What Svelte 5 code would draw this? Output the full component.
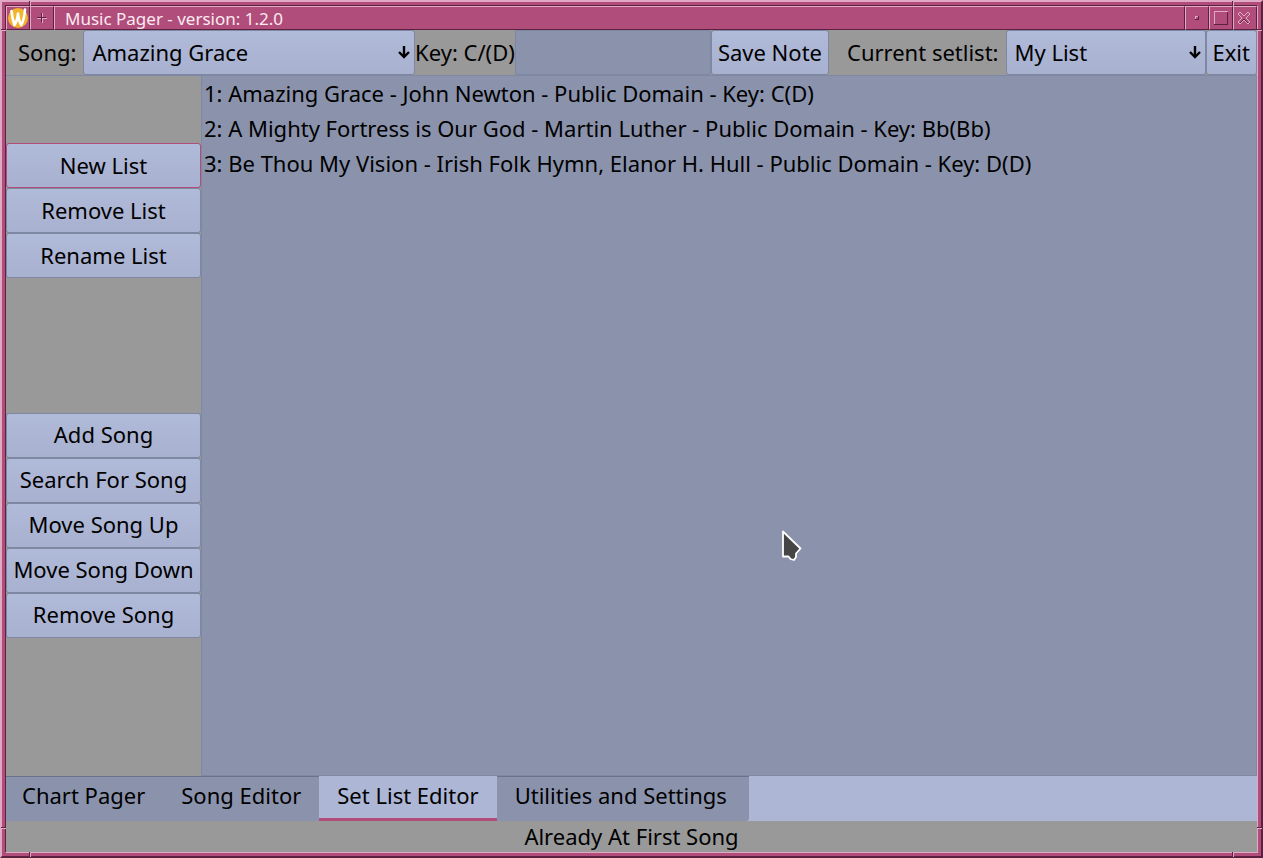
<script>
  let song = $state('Amazing Grace');
  let setlist = $state('My List');
  let note = $state('');
  let activeTab = $state('Set List Editor');

  const songs = [
    '1: Amazing Grace - John Newton - Public Domain - Key: C(D)',
    '2: A Mighty Fortress is Our God - Martin Luther - Public Domain - Key: Bb(Bb)',
    '3: Be Thou My Vision - Irish Folk Hymn, Elanor H. Hull - Public Domain - Key: D(D)'
  ];
  const listActions = ['New List', 'Remove List', 'Rename List'];
  const songActions = ['Add Song', 'Search For Song', 'Move Song Up', 'Move Song Down', 'Remove Song'];
  const tabs = ['Chart Pager', 'Song Editor', 'Set List Editor', 'Utilities and Settings'];
</script>

{#snippet arrow()}
  <svg class="arrow" width="14" height="16" viewBox="0 0 14 16" aria-hidden="true">
    <path d="M7 2V13M2 8L7 13L12 8" fill="none" stroke="#000" stroke-width="2.4" />
  </svg>
{/snippet}

<div class="window">
  <span class="notch h tl"></span>
  <span class="notch h bl"></span>
  <span class="notch h tr"></span>
  <span class="notch h br"></span>
  <span class="notch v tl"></span>
  <span class="notch v bl"></span>
  <span class="notch v tr"></span>
  <span class="notch v br"></span>

  <header class="titlebar">
    <button class="tb" aria-label="Window menu">
      <svg width="22" height="22" viewBox="0 0 22 22">
        <circle cx="11" cy="11" r="10" fill="#f2b42c" />
        <path d="M4.500 4C5 9 6 14 7.500 18C9.500 15 10.500 11 11 6.500C11.500 11 12.500 15 14.200 18C16.500 14 17.500 9 18 2.500" fill="none" stroke="#fff" stroke-width="2.600" stroke-linejoin="round" stroke-linecap="round" />
      </svg>
    </button>
    <button class="tb" aria-label="Stick window">
      <svg width="22" height="22" viewBox="0 0 22 22" shape-rendering="crispEdges">
        <path d="M6 11.500H16M11.500 6V16" stroke="#e0aac4" />
        <path d="M6 10.500H15M10.500 6V15" stroke="#5c2040" />
      </svg>
    </button>
    <h1>Music Pager - version: 1.2.0</h1>
    <button class="tb" aria-label="Minimize">
      <svg width="22" height="22" viewBox="0 0 22 22" shape-rendering="crispEdges">
        <path d="M9.500 13V9.500H12" fill="none" stroke="#e0aac4" />
        <path d="M12.500 9V12.500H9" fill="none" stroke="#5c2040" />
      </svg>
    </button>
    <button class="tb" aria-label="Maximize">
      <svg width="22" height="22" viewBox="0 0 22 22" shape-rendering="crispEdges">
        <path d="M4.500 18V4.500H18" fill="none" stroke="#e0aac4" />
        <path d="M17.500 5V17.500H4" fill="none" stroke="#5c2040" />
      </svg>
    </button>
    <button class="tb" aria-label="Close">
      <svg width="22" height="22" viewBox="0 0 22 22">
        <path d="M16 7L12 11L16 15L15 17L10 12L6 16" fill="none" stroke="#5c2040" />
        <path d="M4 15L8 11L4 7L6 5L10 9L14 5L16 7L12 11L16 15L14 17L10 13L6 17Z" fill="none" stroke="#e0aac4" />
      </svg>
    </button>
  </header>

  <div class="toolbar">
    <label class="song-label" for="song">Song:</label>
    <div class="picker song">
      <select id="song" bind:value={song}>
        <option>Amazing Grace</option>
        <option>A Mighty Fortress is Our God</option>
        <option>Be Thou My Vision</option>
      </select>
      {@render arrow()}
    </div>
    <label class="key" for="note">Key: C/(D)</label>
    <input id="note" type="text" bind:value={note} />
    <button class="btn">Save Note</button>
    <label class="list-label" for="setlist">Current setlist:</label>
    <div class="picker list">
      <select id="setlist" bind:value={setlist}>
        <option>My List</option>
      </select>
      {@render arrow()}
    </div>
    <button class="btn">Exit</button>
  </div>

  <main>
    <aside>
      <div class="one"></div>
      {#each listActions as name, i}
        <button class="btn" class:focused={i === 0}>{name}</button>
      {/each}
      <div class="two"></div>
      {#each songActions as name}
        <button class="btn">{name}</button>
      {/each}
      <div class="two"></div>
    </aside>
    <ul>
      {#each songs as line}
        <li>{line}</li>
      {/each}
    </ul>
  </main>

  <nav>
    {#each tabs as tab}
      <button class="tab" class:active={activeTab === tab} onclick={() => (activeTab = tab)}>{tab}</button>
    {/each}
  </nav>
  <footer>Already At First Song</footer>

  <svg class="pointer" width="24" height="36" viewBox="0 0 24 36" aria-hidden="true">
    <path d="M5 6.500V31.500H10.500L12.500 34L16 35L18 32V28.500L22.500 23.500Z" fill="#454545" stroke="#fff" stroke-width="1.800" stroke-linejoin="round" />
  </svg>
</div>

<style>
  :global(body) {
    margin: 0;
  }
  .window,
  .window * {
    box-sizing: border-box;
  }
  .window {
    --pink: #b04d7a;
    --light: #e0aac4;
    --dark: #5c2040;
    --edge: #7f88a2;
    --field: #8b93ac;
    --grey: #999999;
    position: relative;
    display: flex;
    flex-direction: column;
    height: 100vh;
    padding: 3px;
    background: var(--pink);
    border: 2px solid;
    border-color: var(--light) var(--dark) var(--dark) var(--light);
    font: 22px/30px "Noto Sans", sans-serif;
    color: #000;
  }
  button,
  select,
  input {
    margin: 0;
    font: inherit;
    color: inherit;
    border-radius: 0;
    outline: none;
  }
  .titlebar {
    display: flex;
    height: 25px;
    flex: none;
    border: solid;
    border-width: 1px 1px 0;
    border-color: var(--dark) var(--light) var(--dark) var(--dark);
  }
  .tb,
  h1 {
    margin: 0;
    background: var(--pink);
    border: 1px solid;
    border-color: var(--light) var(--dark) var(--dark) var(--light);
  }
  .tb {
    width: 24px;
    padding: 0;
    display: flex;
    align-items: center;
    justify-content: center;
    flex: none;
  }
  .tb svg {
    flex: none;
  }
  h1 {
    flex: 1;
    padding-left: 10px;
    font-size: 17px;
    line-height: 24px;
    font-weight: 400;
    color: #fbeaf2;
  }
  .toolbar {
    display: flex;
    height: 45px;
    flex: none;
    border-left: 1px solid var(--dark);
    border-right: 1px solid var(--light);
    background: var(--grey);
  }
  .toolbar label {
    flex: none;
    line-height: 45px;
    white-space: nowrap;
  }
  .song-label {
    padding: 0 7px 0 12px;
  }
  .list-label {
    padding: 0 7px 0 18px;
  }
  .picker {
    position: relative;
  }
  .song {
    flex: 1 1 330px;
  }
  .list {
    flex: 0 1 200px;
  }
  .btn,
  select {
    height: 45px;
    background: linear-gradient(#b0bad9, #a8b1cf);
    border: 1px solid var(--edge);
    border-radius: 3px;
  }
  .btn {
    flex: none;
    padding: 0 6px 2px;
    white-space: nowrap;
  }
  select {
    appearance: none;
    width: 100%;
    padding: 0 28px 2px 8px;
  }
  .arrow {
    position: absolute;
    right: 4px;
    top: 14px;
    pointer-events: none;
  }
  input {
    flex: 0 1 196px;
    min-width: 0;
    padding: 0 6px;
    background: var(--field);
    border: 1px solid var(--edge);
    border-radius: 2px;
  }
  main {
    display: flex;
    flex: 1;
    min-height: 0;
    border-left: 1px solid var(--dark);
    border-right: 1px solid var(--light);
    background: var(--grey);
  }
  aside {
    display: flex;
    flex-direction: column;
    width: 195px;
    flex: none;
    padding-bottom: 4px;
    border-top: 1px solid var(--edge);
  }
  .one {
    flex: 1;
  }
  .two {
    flex: 2;
  }
  .focused {
    z-index: 1;
    border-color: var(--pink);
  }
  ul {
    flex: 1;
    margin: 0;
    padding: 0 2px;
    list-style: none;
    background: var(--field);
    border: 1px solid var(--edge);
  }
  li {
    line-height: 35px;
  }
  nav {
    display: flex;
    height: 45px;
    flex: none;
    background: #adb6d5;
    border-left: 1px solid var(--dark);
    border-right: 1px solid var(--light);
  }
  .tab {
    padding: 0 18px 6px;
    background: var(--field);
    border: 0;
    border-top: 1px solid #6b738c;
    border-bottom: 3px solid var(--field);
    white-space: nowrap;
  }
  .tab:first-child {
    padding-left: 16px;
  }
  .tab:last-child {
    padding-right: 22px;
    border-bottom-right-radius: 3px;
  }
  .tab.active {
    background: #adb6d5;
    border-top-color: #adb6d5;
    border-bottom-color: var(--pink);
  }
  footer {
    height: 32px;
    flex: none;
    text-align: center;
    background: var(--grey);
    border: solid;
    border-width: 0 1px 1px;
    border-color: var(--grey) var(--light) var(--light) var(--dark);
  }
  .notch {
    position: absolute;
    background: var(--dark);
  }
  .notch.h {
    width: 5px;
    height: 2px;
    border-bottom: 1px solid var(--light);
  }
  .notch.v {
    width: 2px;
    height: 5px;
    border-right: 1px solid var(--light);
  }
  .h.tl { left: -1px; top: 27px; }
  .h.tr { right: -1px; top: 27px; }
  .h.bl { left: -1px; bottom: 27px; }
  .h.br { right: -1px; bottom: 27px; }
  .v.tl { left: 27px; top: -1px; }
  .v.tr { right: 27px; top: -1px; }
  .v.bl { left: 27px; bottom: -1px; }
  .v.br { right: 27px; bottom: -1px; }
  .pointer {
    position: absolute;
    left: 776px;
    top: 523px;
  }
</style>
